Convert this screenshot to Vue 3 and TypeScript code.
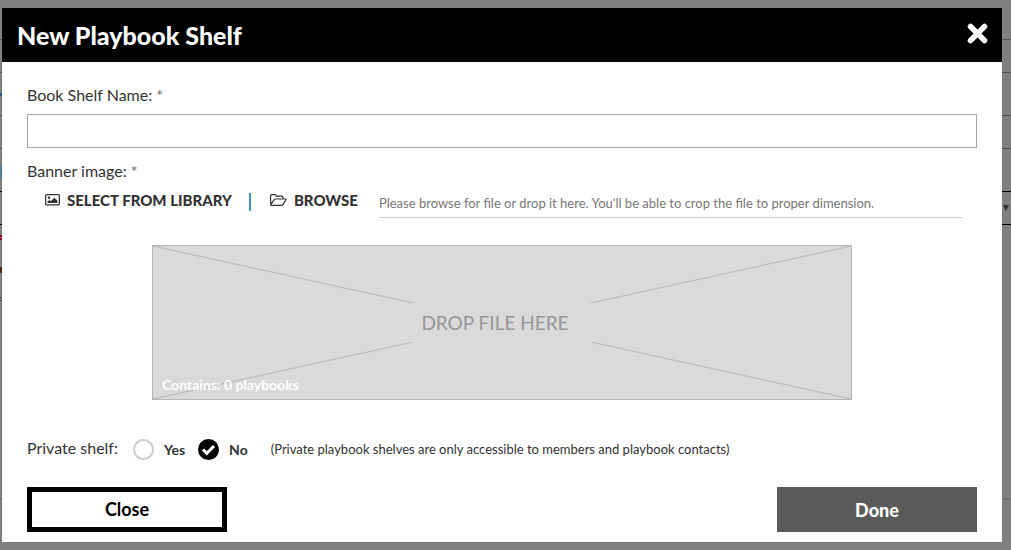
<script setup lang="ts">
import { ref } from 'vue'

const shelfName = ref('')
const fileName = ref('')
const privacy = ref<'yes' | 'no'>('no')
const playbooks = ref(0)
const backdropFields = ['plain', 'plain', 'strong']
</script>

<template>
  <div class="page">
    <div class="backdrop" aria-hidden="true">
      <div v-for="(kind, i) in backdropFields" :key="i" class="ghost" :class="kind">
        <span v-if="kind === 'strong'" class="caret"></span>
      </div>
      <div class="rule"></div>
    </div>

    <section class="modal" role="dialog" aria-labelledby="dialog-title">
      <header class="head">
        <h1 id="dialog-title">New Playbook Shelf</h1>
        <button class="x" type="button" aria-label="Close dialog">
          <svg viewBox="0 0 21 21" width="21" height="21"><path d="M3.500 3.500L17.500 17.500M17.500 3.500L3.500 17.500" stroke="#fff" stroke-width="5.500" stroke-linecap="round" /></svg>
        </button>
      </header>

      <form class="body" @submit.prevent>
        <label class="label" for="shelf-name">Book Shelf Name: <span class="req">*</span></label>
        <input id="shelf-name" v-model="shelfName" class="text" type="text" />

        <label class="label second" for="banner-file">Banner image: <span class="req">*</span></label>
        <div class="tools">
          <button class="tool" type="button">
            <svg viewBox="0 0 15 12" width="15" height="12">
              <rect x="0.600" y="0.600" width="13.800" height="10.300" rx="1" fill="none" stroke="#333" stroke-width="1.200" />
              <circle cx="4" cy="3.800" r="1.200" fill="#333" />
              <path d="M2.500 9V7.500L4.500 6l1.300 1.200L9.300 3.700l3.200 3V9z" fill="#333" />
            </svg>
            SELECT FROM LIBRARY
          </button>
          <span class="sep"></span>
          <button class="tool" type="button">
            <svg viewBox="0 0 17 12" width="17" height="12">
              <path d="M.6 10.4V1.6q0-1 1-1H5q1 0 1 1v.6h6q1 0 1 1V5M.7 10.7L4 5.8q.5-.8 1.3-.8h10q1.3 0 .6 1l-2.900 4.400q-.6 1-1.500 1H1.500q-1 0-.9-1" fill="none" stroke="#333" stroke-width="1.2" stroke-linejoin="round" />
            </svg>
            BROWSE
          </button>
          <input id="banner-file" v-model="fileName" class="file" type="text" readonly placeholder="Please browse for file or drop it here. You'll be able to crop the file to proper dimension." />
        </div>

        <div class="drop">
          <svg class="cross" viewBox="0 0 700 155" preserveAspectRatio="none">
            <path d="M0 0L700 155M0 155L700 0" stroke="#b5b5b5" fill="none" />
          </svg>
          <span class="drop-text">DROP FILE HERE</span>
          <span class="count">Contains: {{ playbooks }} playbooks</span>
        </div>

        <div class="privacy" role="radiogroup" aria-labelledby="privacy-label">
          <span id="privacy-label" class="plabel">Private shelf:</span>
          <label class="choice">
            <input v-model="privacy" type="radio" name="privacy" value="yes" />
            <span class="dot"></span>
            Yes
          </label>
          <label class="choice">
            <input v-model="privacy" type="radio" name="privacy" value="no" />
            <span class="dot"><svg viewBox="0 0 21 21" width="21" height="21"><path d="M5 10.500l3.800 3.800L16 7" fill="none" stroke="#fff" stroke-width="3" /></svg></span>
            No
          </label>
          <span class="note">(Private playbook shelves are only accessible to members and playbook contacts)</span>
        </div>

        <footer class="actions">
          <button class="btn close" type="button">Close</button>
          <button class="btn done" type="submit">Done</button>
        </footer>
      </form>
    </section>
  </div>
</template>

<style>
html, body { margin: 0; background: #808080; }
</style>

<style scoped>
* { box-sizing: border-box; }
.page {
  position: relative;
  min-height: 100vh;
  padding: 8px 9px 8px 2px;
  font-family: Lato, "Liberation Sans", sans-serif;
  color: #333;
}
.backdrop {
  position: absolute;
  inset: 0;
  display: flex;
  flex-direction: column;
  gap: 42px;
  padding-top: 39px;
  overflow: hidden;
  background:
    linear-gradient(#2c5a78, #2c5a78) 0 93px / 2px 3px no-repeat,
    linear-gradient(#4f8098, #4f8098) 0 166px / 2px 12px no-repeat,
    linear-gradient(#a00024, #a00024) 0 235px / 2px 2px no-repeat,
    linear-gradient(#a00024, #a00024) 0 238px / 2px 2px no-repeat,
    linear-gradient(#4a2c14, #4a2c14) 0 267px / 2px 6px no-repeat,
    linear-gradient(#444, #444) 0 297px / 2px 1px no-repeat,
    linear-gradient(#444, #444) 0 300px / 2px 1px no-repeat;
}
.ghost {
  display: flex;
  align-items: center;
  justify-content: flex-end;
  height: 34px;
  border: solid #505050;
  border-width: 1px 0;
}
.ghost.strong { border-color: #000; }
.caret {
  margin-right: 2px;
  border: solid transparent;
  border-width: 6px 3px 0;
  border-top-color: #333;
}
.rule { height: 2px; margin-top: 231px; background: #6e6e6e; }
.modal { position: relative; background: #fff; }
.head {
  display: flex;
  align-items: center;
  justify-content: space-between;
  height: 54px;
  padding: 0 14px 0 15px;
  background: #000;
}
h1 { margin: 0; font-size: 25px; line-height: 30px; font-weight: 900; color: #fff; }
button { font-family: inherit; cursor: pointer; }
.x { display: flex; padding: 0 0 4px; border: 0; background: none; }
.body { padding: 21px 25px 10px; }
.label { display: block; font-size: 16px; line-height: 24px; margin-bottom: 7px; }
.second { margin-top: 11px; margin-bottom: 0; }
.req { color: #666; }
.text {
  display: block;
  width: 100%;
  height: 34px;
  padding: 0 8px;
  border: 1px solid #a6a6a6;
  font: 16px Lato, sans-serif;
}
.tools { display: flex; align-items: flex-start; height: 35px; padding: 0 15px 0 18px; }
.tool {
  display: flex;
  align-items: center;
  gap: 7px;
  height: 33px;
  padding: 0;
  border: 0;
  background: none;
  font-size: 15px;
  line-height: 20px;
  font-weight: 900;
  color: #333;
  white-space: nowrap;
}
.sep { width: 2px; height: 18px; margin: 10px 19px 0 17px; background: #3c93c2; }
.file {
  flex: 1;
  min-width: 0;
  height: 35px;
  margin-left: 21px;
  padding: 5px 0 0;
  border: 0;
  border-bottom: 1px solid #ccc;
  background: none;
  font: 13px Lato, sans-serif;
}
.file::placeholder { color: #777; opacity: 1; }
.drop {
  position: relative;
  display: flex;
  align-items: center;
  justify-content: center;
  max-width: 700px;
  height: 155px;
  margin: 27px auto 0;
  border: 1px solid #b5b5b5;
  background: #d9d9d9;
}
.cross { position: absolute; inset: 0; width: 100%; height: 100%; }
.drop-text {
  position: relative;
  width: 180px;
  padding-right: 14px;
  background: #d9d9d9;
  font-size: 19px;
  line-height: 40px;
  text-align: center;
  color: #969696;
}
.count {
  position: absolute;
  left: 9px;
  bottom: 4px;
  font-size: 14px;
  line-height: 20px;
  font-weight: 700;
  color: #fff;
}
.privacy { display: flex; align-items: center; height: 24px; margin-top: 37px; font-size: 14px; }
.plabel { padding-bottom: 3px; font-size: 16px; margin-right: 15px; }
.choice { position: relative; display: flex; align-items: center; gap: 10px; margin-right: 13px; font-weight: 700; }
.choice input { position: absolute; opacity: 0; margin: 0; width: 21px; height: 21px; }
.dot { display: block; width: 21px; height: 21px; border: 2px solid #ccc; border-radius: 50%; }
.dot svg { display: none; }
input:checked + .dot { border: 0; background: #000; }
input:checked + .dot svg { display: block; }
.note { margin-left: 10px; font-size: 13px; }
.actions { display: flex; justify-content: space-between; margin-top: 26px; }
.btn { width: 200px; height: 45px; padding: 0; font-size: 18px; font-weight: 700; }
.close { padding-bottom: 2px; border: 5px solid #000; background: #fff; color: #000; }
.done { border: 0; background: #5a5a5a; color: #fff; font-weight: 900; }
</style>
